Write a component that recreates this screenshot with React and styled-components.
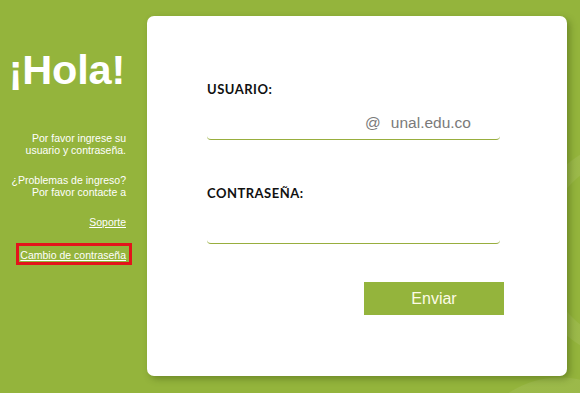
import styled, { createGlobalStyle } from "styled-components"

const Global = createGlobalStyle`
  body {
    margin: 0;
    font-family: "Liberation Sans", Arial, sans-serif;
  }
`;

const Page = styled.div`
  display: flex;
  height: 393px;
  width: 580px;
  overflow: hidden;
  background-color: #94b43c;
  background-image:
    radial-gradient(circle at 640px 250px, transparent 95px, rgba(255,255,255,0.07) 96px, rgba(255,255,255,0.07) 112px, transparent 113px),
    radial-gradient(circle at 560px 470px, transparent 75px, rgba(255,255,255,0.07) 76px, rgba(255,255,255,0.07) 92px, transparent 93px);
`;

const Side = styled.aside`
  display: flex;
  flex-direction: column;
  align-items: flex-end;
  width: 147px;
  box-sizing: border-box;
  padding: 49px 21px 0 0;
  color: #fff;
  text-align: right;
`;

const Hello = styled.h1`
  margin: 0 1px 41px 0;
  font-size: 41.5px;
  line-height: 42px;
  font-weight: bold;
  letter-spacing: -0.2px;
`;

const Note = styled.p`
  margin: 0 0 18px;
  font-size: 10.5px;
  line-height: 12px;
`;

const Link = styled.a`
  display: block;
  color: #fff;
  font-size: 10.5px;
  line-height: 12px;
  text-decoration: underline;
  margin-bottom: 18px;
  padding: ${p => (p.$boxed ? "3px 3px 1px 1px" : "0")};
  border: ${p => (p.$boxed ? "3px solid #e3141b" : "none")};
  margin-top: ${p => (p.$boxed ? "-3px" : "0")};
  margin-right: ${p => (p.$boxed ? "-6px" : "0")};
`;

const Card = styled.main`
  display: flex;
  flex-direction: column;
  width: 420px;
  height: 360px;
  margin-top: 16px;
  box-sizing: border-box;
  padding: 65px 67px 0 60px;
  background: #fff;
  border-radius: 7px;
  box-shadow: 3px 3px 7px rgba(40, 60, 0, 0.35);
`;

const Label = styled.label`
  font-family: Lato, "Liberation Sans", sans-serif;
  font-weight: bold;
  font-size: 13px;
  line-height: 16px;
  letter-spacing: 0.5px;
  color: #111;
`;

const Field = styled.div`
  display: flex;
  align-items: center;
  height: 42px;
  border-bottom: 1px solid #98ae3e;
  border-radius: 0 0 4px 4px;
  margin-bottom: ${p => p.$gap || 0}px;
  color: #7a7a7a;
  font-size: 15.5px;
`;

const Input = styled.input`
  flex: 1;
  min-width: 0;
  border: none;
  outline: none;
  background: transparent;
  font: inherit;
`;

const Domain = styled.span`
  display: flex;
  gap: 10px;
  padding: 10px 29px 0 0;
  font-family: "Liberation Sans", Arial, sans-serif;
`;

const Button = styled.button`
  align-self: flex-end;
  margin-right: -4px;
  width: 140px;
  height: 33px;
  border: none;
  background: #94b43c;
  color: #fdfbe6;
  font-family: "Liberation Sans", Arial, sans-serif;
  font-size: 16px;
  cursor: pointer;
`;

function App() {
  return (
    <Page>
      <Global />
      <Side>
        <Hello>¡Hola!</Hello>
        <Note>Por favor ingrese su<br />usuario y contraseña.</Note>
        <Note>¿Problemas de ingreso?<br />Por favor contacte a</Note>
        <Link href="#">Soporte</Link>
        <Link href="#" $boxed>Cambio de contraseña</Link>
      </Side>
      <Card>
        <Label>USUARIO:</Label>
        <Field $gap={45}>
          <Input type="text" />
          <Domain><span>@</span><span>unal.edu.co</span></Domain>
        </Field>
        <Label>CONTRASEÑA:</Label>
        <Field $gap={38}>
          <Input type="password" />
        </Field>
        <Button>Enviar</Button>
      </Card>
    </Page>
  )
}

export default App
